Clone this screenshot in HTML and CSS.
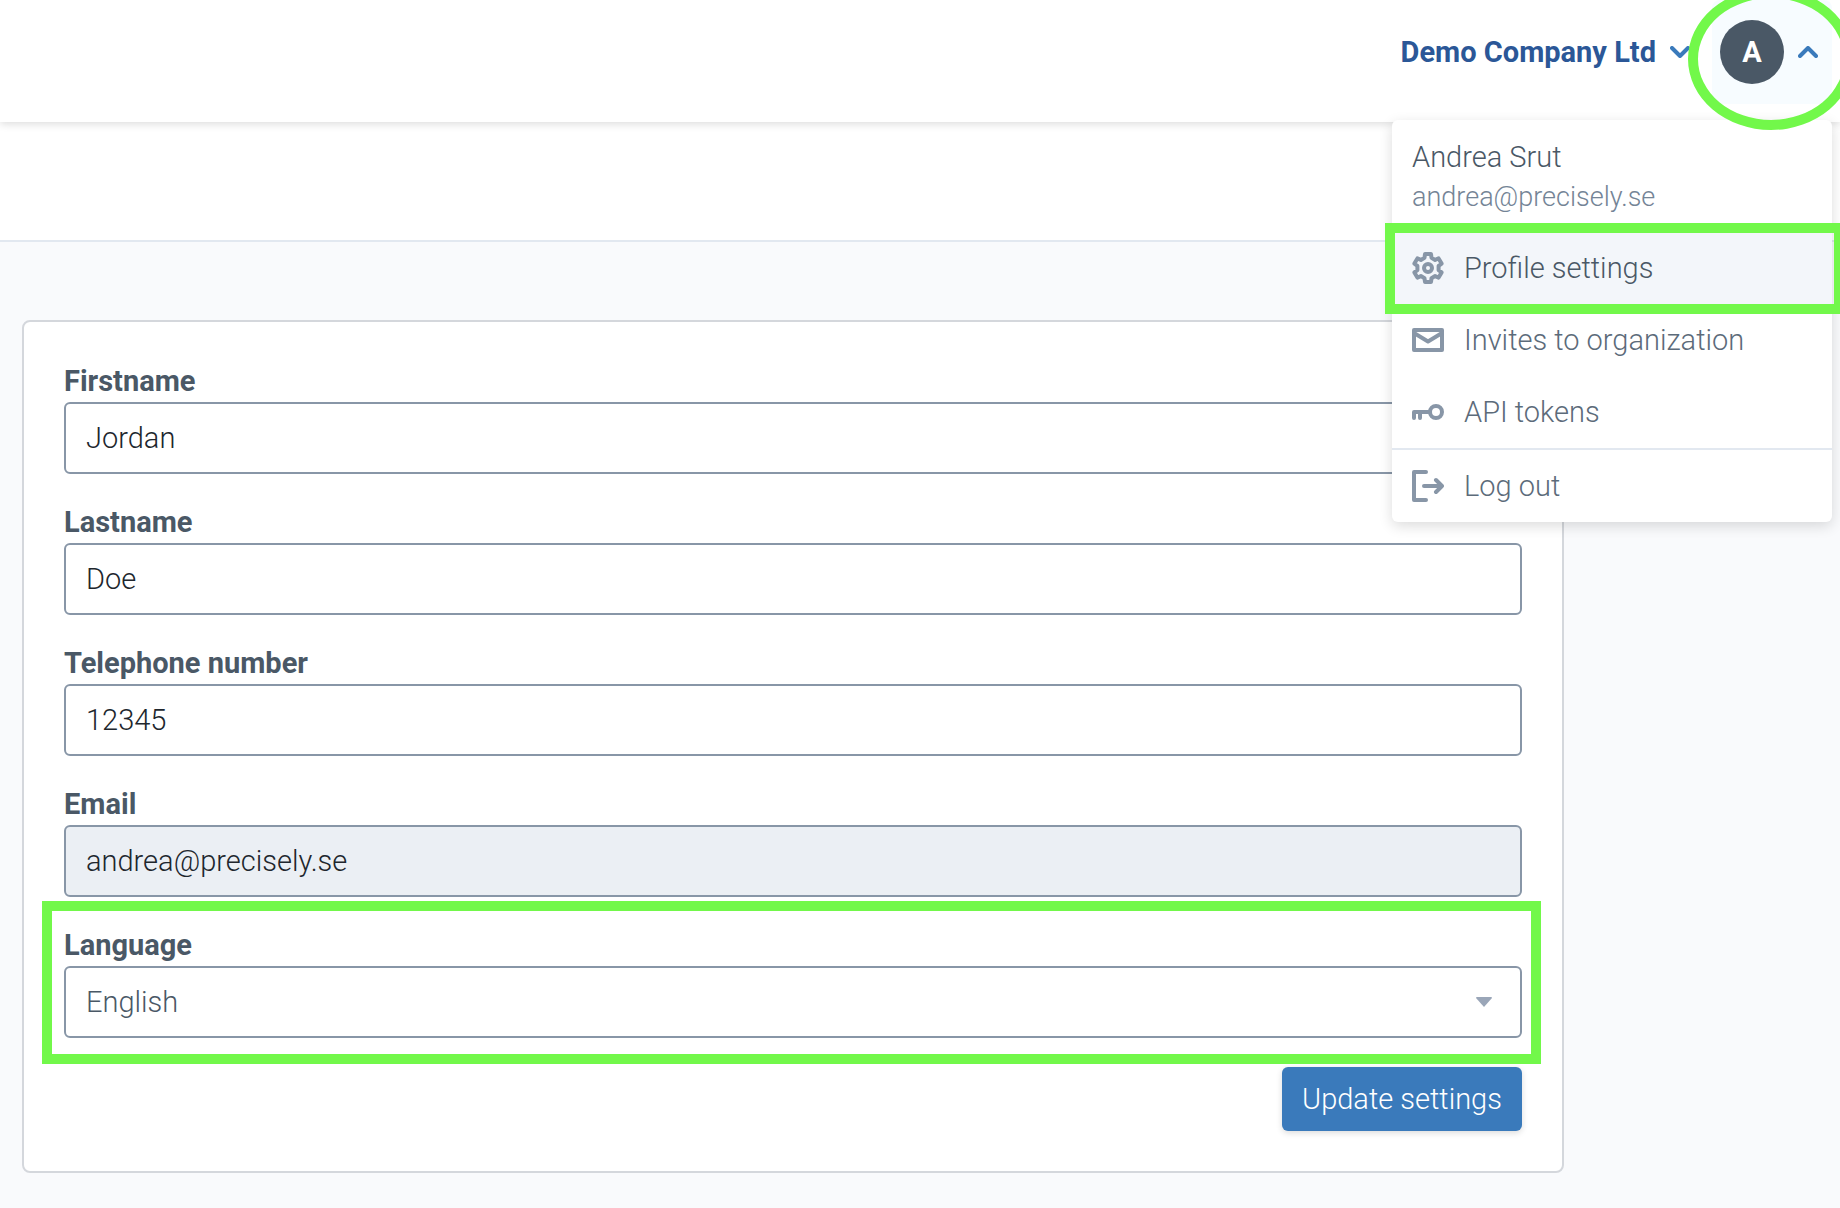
FILE: index.html
```
<!DOCTYPE html>
<html lang="en">
<head>
	<meta charset="utf-8">
	<title>Profile settings</title>
	<link rel="stylesheet" href="styles.css">
</head>
<body>
	<header class="topbar">
		<button type="button" class="org-button">
			Demo Company Ltd
			<svg class="chevron" viewBox="0 0 20 12"><path d="M2 2l8 8 8-8"/></svg>
		</button>
		<div class="account">
			<button type="button" class="account-button marked-round" aria-expanded="true">
				<span class="avatar">A</span>
				<svg class="chevron" viewBox="0 0 20 12"><path d="M2 10l8-8 8 8"/></svg>
			</button>
			<nav class="menu">
				<div class="menu-user">
					<div class="user-name">Andrea Srut</div>
					<div class="user-email">andrea@precisely.se</div>
				</div>
				<a href="#profile" class="menu-item active marked">
					<svg class="icon" viewBox="-16 -16 32 32">
						<path d="M-3.5-10.2L-3-14H3L3.5-10.2 7.1-8.1 10.6-9.6 13.6-4.4 10.6-2.1V2.1L13.6 4.4 10.6 9.6 7.1 8.1 3.5 10.2 3 14H-3L-3.5 10.2-7.1 8.1-10.6 9.6-13.6 4.4-10.6 2.1V-2.1L-13.6-4.4-10.6-9.6-7.1-8.1Z"/>
						<circle r="4"/>
					</svg>
					Profile settings
				</a>
				<a href="#invites" class="menu-item">
					<svg class="icon" viewBox="0 0 32 32">
						<rect x="2" y="6" width="28" height="20"/>
						<path d="M2 9l14 8.500 14-8.500"/>
					</svg>
					Invites to organization
				</a>
				<a href="#tokens" class="menu-item">
					<svg class="icon" viewBox="0 0 32 32">
						<circle cx="24" cy="16" r="6"/>
						<path d="M18 16H2v6M8 16v6"/>
					</svg>
					API tokens
				</a>
				<a href="#logout" class="menu-item logout">
					<svg class="icon" viewBox="0 0 32 32">
						<path d="M14 2H2v28h12M12 16h18M24 10l6 6-6 6"/>
					</svg>
					Log out
				</a>
			</nav>
		</div>
	</header>

	<div class="subbar"></div>

	<main class="content">
		<form class="card">
			<div class="field">
				<label for="firstname">Firstname</label>
				<input type="text" id="firstname" value="Jordan">
			</div>
			<div class="field">
				<label for="lastname">Lastname</label>
				<input type="text" id="lastname" value="Doe">
			</div>
			<div class="field">
				<label for="phone">Telephone number</label>
				<input type="text" id="phone" value="12345">
			</div>
			<div class="field">
				<label for="email">Email</label>
				<input type="text" id="email" value="andrea@precisely.se" readonly>
			</div>
			<div class="field marked">
				<label for="language">Language</label>
				<div class="select">
					<select id="language">
						<option>English</option>
						<option>Svenska</option>
					</select>
					<svg class="caret" viewBox="0 0 16 10"><path d="M1 0h14q1 0 1 1L8 10 0 1q0-1 1-1Z"/></svg>
				</div>
			</div>
			<button type="submit" class="submit">Update settings</button>
		</form>
	</main>
</body>
</html>
```

FILE: styles.css
```
* {
	box-sizing: border-box;
}

html, body {
	overflow-x: hidden;
}

body {
	margin: 0;
	min-height: 100vh;
	background: #f9fafc;
	color: #4a5866;
	font-family: Roboto, sans-serif;
	font-size: 29px;
	font-weight: 300;
	line-height: 38px;
}

button, input, select {
	font: inherit;
}

/* top bar */
.topbar {
	position: relative;
	z-index: 1;
	display: flex;
	justify-content: flex-end;
	padding: 0 8px 18px;
	background: #fff;
	box-shadow: 0 2px 8px rgba(0, 0, 0, 0.14);
}

.org-button, .account-button {
	display: flex;
	align-items: center;
	gap: 14px;
	height: 104px;
	border: 0;
	background: none;
}

.org-button {
	padding: 0 22px;
	color: #2b5797;
	font-weight: 700;
}

.account {
	position: relative;
}

.account-button {
	padding: 0 14px 0 8px;
	background: #f7fcff;
	border-radius: 8px;
}

.avatar {
	width: 64px;
	height: 64px;
	border-radius: 50%;
	background: #4a5866;
	color: #fff;
	font-weight: 700;
	line-height: 64px;
	text-align: center;
}

.chevron {
	width: 20px;
	height: 12px;
	fill: none;
	stroke: #3a7abb;
	stroke-width: 4;
	stroke-linecap: round;
	stroke-linejoin: round;
}

/* account menu */
.menu {
	position: absolute;
	top: 120px;
	right: 0;
	width: 440px;
	background: #fff;
	border-radius: 6px;
	box-shadow: 0 4px 14px rgba(0, 0, 0, 0.14);
}

.menu-user {
	padding: 18px 20px 16px;
}

.user-email {
	padding-top: 2px;
	color: #748496;
	font-size: 27px;
}

.menu-item {
	display: flex;
	align-items: center;
	gap: 20px;
	height: 72px;
	padding: 0 20px;
	color: #5c6b7a;
	text-decoration: none;
}

.menu-item.active {
	background: #f3f6fa;
	color: #4a5866;
}

.menu-item.logout {
	height: 74px;
	border-top: 2px solid #e2e8f0;
}

.icon {
	width: 32px;
	height: 32px;
	fill: none;
	stroke: #8896a7;
	stroke-width: 4;
	stroke-linecap: round;
	stroke-linejoin: round;
}

.subbar {
	height: 120px;
	background: #fff;
	border-bottom: 2px solid #e2e8f0;
}

/* settings form */
.content {
	padding: 78px 276px 34px 22px;
}

.card {
	display: flex;
	flex-direction: column;
	gap: 29px;
	padding: 40px;
	background: #fff;
	border: 2px solid #d4d7dc;
	border-radius: 8px;
}

.field label {
	display: block;
	margin-bottom: 2px;
	font-weight: 700;
}

.field input, .field select {
	display: block;
	width: 100%;
	height: 72px;
	padding: 0 20px;
	background: #fff;
	border: 2px solid #8896a7;
	border-radius: 6px;
	color: #20262d;
}

.field input[readonly] {
	background: #ebeff4;
}

.select {
	position: relative;
}

.field select {
	appearance: none;
	color: #4a5866;
}

.caret {
	position: absolute;
	top: 31px;
	right: 30px;
	width: 16px;
	height: 10px;
	fill: #9aa6b8;
	pointer-events: none;
}

.submit {
	align-self: flex-end;
	width: 240px;
	height: 64px;
	padding: 0;
	border: 0;
	border-radius: 6px;
	background: #3a7abb;
	box-shadow: 0 2px 6px rgba(0, 0, 0, 0.14);
	color: #fff;
}

/* green highlights */
.marked, .marked-round {
	position: relative;
}

.marked::after, .marked-round::after {
	content: "";
	position: absolute;
	border: 10px solid #72f84a;
	pointer-events: none;
}

.field.marked::after {
	inset: -25px -19px -26px -22px;
}

.menu-item.marked::after {
	inset: -9px -12px -10px -7px;
}

.marked-round::after {
	z-index: 1;
	inset: -12px -22px -26px -24px;
	border-radius: 50%;
}
```
